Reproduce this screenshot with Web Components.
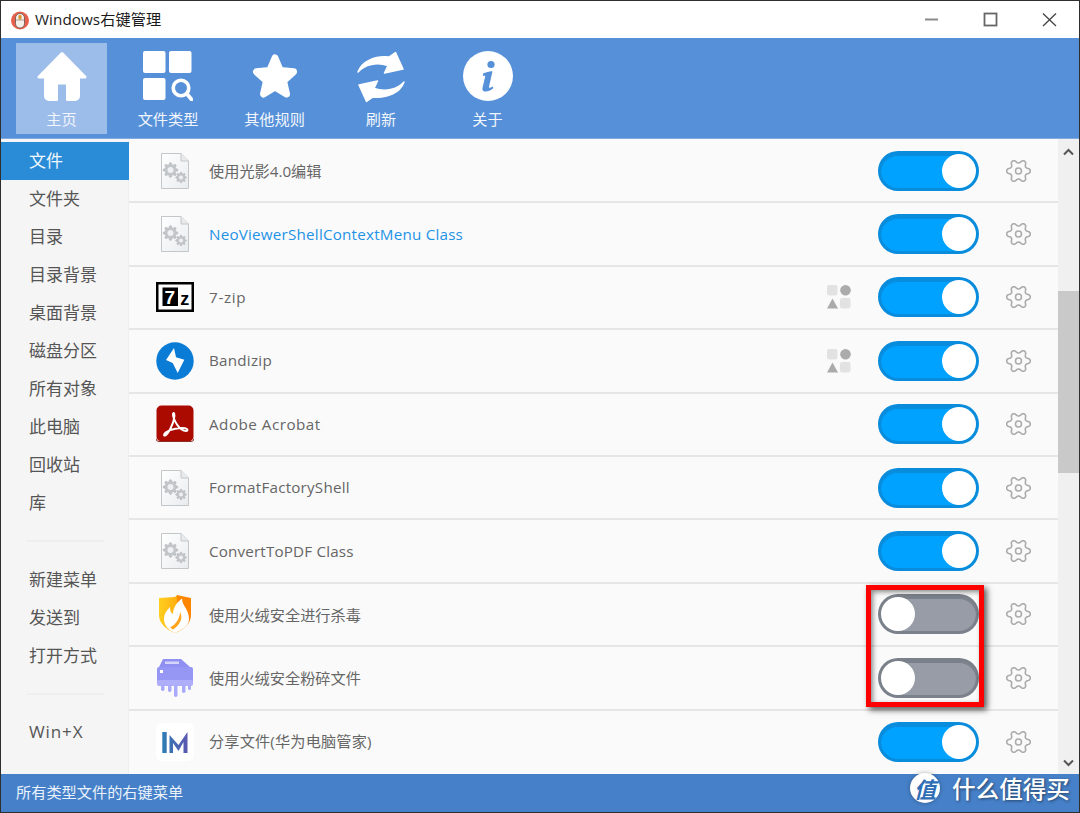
<!DOCTYPE html>
<html lang="zh"><head><meta charset="utf-8"><title>Windows右键管理</title>
<style>
html,body{margin:0;padding:0;height:100%;overflow:hidden}
body{background:#2e2e2e;font-family:"Open Sans","Noto Sans CJK SC",sans-serif}
svg{display:block}
</style></head><body>
<app-window>
  <title-bar slot="title">Windows右键管理</title-bar>
  <tool-bar slot="tools">
    <tool-item active label="主页"><svg width="50" height="50" viewBox="0 0 50 50"><path fill="#fff" stroke="#fff" stroke-width="3" stroke-linejoin="round" d="M25 2.500 2 26H8.500V45a3.500 3.500 0 0 0 3.500 3.500H19.500V32H30.500V48.500H38A3.500 3.500 0 0 0 41.500 45V26H48Z"/></svg></tool-item>
    <tool-item label="文件类型"><svg width="50" height="50" viewBox="0 0 50 50"><g fill="#fff"><rect x="0" y="0" width="22.500" height="22" rx="2"/><rect x="26" y="0" width="22.500" height="22" rx="2"/><rect x="0" y="27" width="22.500" height="22" rx="2"/></g><circle cx="38" cy="37" r="7.800" fill="none" stroke="#fff" stroke-width="3.600"/><path d="M44 43l5 6" stroke="#fff" stroke-width="3.800" stroke-linecap="round"/></svg></tool-item>
    <tool-item label="其他规则"><svg width="50" height="50" viewBox="0 0 50 50"><path fill="#fff" stroke="#fff" stroke-width="7" stroke-linejoin="round" d="M25 7 30.300 19.500 43.500 20.800 33.500 29.800 36.500 43 25 36 13.500 43 16.500 29.800 6.500 20.800 19.700 19.500Z"/></svg></tool-item>
    <tool-item label="刷新"><svg width="50" height="52" viewBox="0 0 48 52"><g fill="#fff" stroke="#fff" stroke-width="1.500" stroke-linejoin="round"><path d="M1 21C5 10 18 4.500 32 6L38.500 1.500 46 18 27.500 22 31 14.500C20 11 8 13 1 21Z"/><path d="M47 31C43 42 30 47.500 16 46L9.500 50.500 2 34 20.500 30 17 37.500C28 41 40 39 47 31Z"/></g></svg></tool-item>
    <tool-item label="关于"><svg width="50" height="50" viewBox="0 0 50 50"><circle cx="25" cy="25" r="25" fill="#fff"/><circle cx="28" cy="13.500" r="3.600" fill="#5590d8"/><path fill="#5590d8" d="M20 22.500c3-1.500 7-2.500 9.500-2.300l-3.500 15.500c-.3 1.400.8 1.600 3.800-.2l.6 1.400c-3 2.700-5.800 3.600-8 3.500-2.800-.1-3.300-1.800-2.800-4l2.700-11.500c-.8-.2-1.400-.1-2.300.1Z"/></svg></tool-item>
  </tool-bar>
  <side-bar slot="side">
    <side-item active>文件</side-item><side-item>文件夹</side-item><side-item>目录</side-item><side-item>目录背景</side-item><side-item>桌面背景</side-item><side-item>磁盘分区</side-item><side-item>所有对象</side-item><side-item>此电脑</side-item><side-item>回收站</side-item><side-item>库</side-item>
    <side-sep></side-sep>
    <side-item>新建菜单</side-item><side-item>发送到</side-item><side-item>打开方式</side-item>
    <side-sep></side-sep>
    <side-item style="letter-spacing:.9px">Win+X</side-item>
  </side-bar>
  <rule-list slot="list">
    <rule-row on><file-icon slot="icon"></file-icon>使用光影4.0编辑</rule-row>
    <rule-row on link style="letter-spacing:.22px"><file-icon slot="icon"></file-icon>NeoViewerShellContextMenu Class</rule-row>
    <rule-row on shapes style="letter-spacing:.7px"><svg slot="icon" width="38" height="30" viewBox="0 0 38 30"><rect x="1.250" y="1.250" width="35.500" height="27.500" fill="#fff" stroke="#000" stroke-width="2.500"/><rect x="6.500" y="5.500" width="15.500" height="18.500" fill="#000"/><text x="14.200" y="21.500" text-anchor="middle" font-family="Liberation Sans" font-weight="700" font-size="19" fill="#fff">7</text><text x="29" y="22.500" text-anchor="middle" font-family="Liberation Sans" font-weight="700" font-size="18" fill="#000">z</text></svg>7-zip</rule-row>
    <rule-row on shapes style="letter-spacing:.25px"><svg slot="icon" width="38" height="38" viewBox="0 0 38 38"><circle cx="19" cy="19" r="18.700" fill="#0a7cd6"/><path fill="#fff" d="M18 6 10 18 16.700 21 21.700 31 28.300 17.700 20 15.300Z"/></svg>Bandizip</rule-row>
    <rule-row on style="letter-spacing:.5px"><svg slot="icon" width="38" height="38" viewBox="0 0 38 38"><rect x=".5" y=".5" width="37" height="36" rx="5" fill="#ab0a00"/><path d="M0 33.500q0 3 3 3h32q3 0 3-3" fill="none" stroke="#8c2d25" stroke-width="1"/><path fill="none" stroke="#fff" stroke-width="2" stroke-linejoin="round" d="M17.500 8c-1.500 1 .5 7 3.500 11.500s6.500 6.500 9 6.500c2.500 0 1.500-2.500-1-2.800-5.500-.6-14 .5-19 4-2.500 2-2.300 3.800-1 3.300 2.800-1 8.500-11 9.300-18.500.3-2.500-.3-4.500-.8-4Z"/></svg>Adobe Acrobat</rule-row>
    <rule-row on style="letter-spacing:.22px"><file-icon slot="icon"></file-icon>FormatFactoryShell</rule-row>
    <rule-row on style="letter-spacing:.17px"><file-icon slot="icon"></file-icon>ConvertToPDF Class</rule-row>
    <rule-row><svg slot="icon" width="34" height="40" viewBox="0 0 34 40"><defs><linearGradient id="sh" x1="0" x2="1" y1="0" y2="0"><stop offset="0" stop-color="#ffcf1f"/><stop offset=".55" stop-color="#ffb012"/><stop offset=".56" stop-color="#ff8a00"/><stop offset="1" stop-color="#ff8400"/></linearGradient></defs><path fill="url(#sh)" d="M17 3 19 1 33 4V21C33 30 25 36 17 39 9 36 1 30 1 21V4Z"/><path fill="#fff" d="M24 4.500C24 12 31 15 31 25 31 32 24 36 17 39 10 36 6 31 6 25 6 20 9 16 12 13 12 17 13 19 15 20 15 14 18 9 24 4.500Z"/><path fill="#ffa41a" d="M12 33.500C18 30.500 22 24 22 18 25.500 24 22 31 15 35.500Z"/></svg>使用火绒安全进行杀毒</rule-row>
    <rule-row><svg slot="icon" width="36" height="38" viewBox="0 0 36 38"><path fill="#9090f2" d="M6 0H24L33 8H2Z"/><rect x="8" y="2.500" width="14" height="2.500" fill="#d5d5fc"/><rect x="0" y="8" width="36" height="17" rx="2" fill="#9696f5"/><rect x="3" y="11" width="3" height="3" fill="#fff"/><rect x="0" y="21" width="36" height="6" rx="2" fill="#aeaefb"/><g fill="#aaaafa"><rect x="4" y="26" width="3.500" height="6" rx="1.700"/><rect x="11" y="26" width="3.500" height="7" rx="1.700"/><rect x="17" y="26" width="3.500" height="12" rx="1.700"/><rect x="25" y="26" width="3.500" height="8" rx="1.700"/><rect x="31" y="26" width="3" height="5" rx="1.500"/></g></svg>使用火绒安全粉碎文件</rule-row>
    <rule-row on style="letter-spacing:.15px"><svg slot="icon" width="38" height="38" viewBox="0 0 38 38"><defs><linearGradient id="mm" x1="0" x2="1" y1="0" y2="0"><stop offset="0" stop-color="#2f7db5"/><stop offset="1" stop-color="#5b58b0"/></linearGradient></defs><rect width="38" height="38" rx="6" fill="#fff"/><path fill="url(#mm)" d="M6.300 9H10.700V30H6.300ZM13.500 12 22.500 22 31.500 9V30H27.500V19L22.500 28 17 20V30H13.500Z"/></svg>分享文件(华为电脑管家)</rule-row>
  </rule-list>
  <scroll-bar slot="scroll"></scroll-bar>
  <status-bar slot="status">所有类型文件的右键菜单</status-bar>
  <red-mark slot="overlay"></red-mark>
  <water-mark slot="overlay"></water-mark>
</app-window>
<script>
function def(name, css, html){
  customElements.define(name, class extends HTMLElement{
    constructor(){super();const r=this.attachShadow({mode:'open'});r.innerHTML='<style>'+css+'</style>'+(typeof html==='function'?html(this):html);}
  });
}
function polar(cx,cy,teeth,base,amp,pow,sy){
  let d='';const n=120;
  for(let i=0;i<=n;i++){
    const t=i/n*Math.PI*2, c=Math.cos(teeth*t);
    const r=base+amp*Math.sign(c)*Math.pow(Math.abs(c),pow);
    d+=(i?'L':'M')+(cx+r*Math.cos(t)).toFixed(2)+' '+(cy+r*sy*Math.sin(t)).toFixed(2);
  }
  return d+'Z';
}
def('app-window',`
:host{display:grid;position:relative;margin:1px;height:811px;width:1078px;
 grid-template-columns:128px 1fr 21px;grid-template-rows:37px 101px 1fr 38px;background:#fafafa}
.t{grid-column:1/4}
.s{grid-column:1;grid-row:3;min-height:0}
.l{grid-column:2;grid-row:3;min-height:0;min-width:0}.c{grid-column:3;grid-row:3;min-height:0}
`,`<div class="t"><slot name="title"></slot></div><div class="t"><slot name="tools"></slot></div>
<div class="s"><slot name="side"></slot></div><div class="l"><slot name="list"></slot></div><div class="c"><slot name="scroll"></slot></div>
<div class="t" style="grid-row:4"><slot name="status"></slot></div><slot name="overlay"></slot>`);
def('title-bar',`
:host{display:flex;align-items:center;height:37px;background:#fff;color:#1a1a1a;font-size:15.200px;padding-left:10px;box-sizing:border-box}
.n{margin-left:6px;flex:1;margin-top:-3px;letter-spacing:.08px}
.w{display:flex}
.w svg{display:block;width:59px;height:37px}
`,`<svg width="18" height="20" viewBox="0 0 18 20" style="display:block"><circle cx="9" cy="10.500" r="9" fill="#e8604c"/><rect x="4.500" y="3.500" width="9" height="14.500" rx="4.400" fill="#f5f0ea" stroke="#6d5a50" stroke-width=".9"/><rect x="7.500" y="5" width="3" height="4.500" rx="1.200" fill="#d9962f"/><path d="M4.500 10H13.500" stroke="#8a7a70" stroke-width=".7"/></svg>
<span class="n"><slot></slot></span>
<div class="w">
<svg viewBox="0 0 59 37"><path d="M23 18.500H36" stroke="#8a8a8a" stroke-width="2"/></svg>
<svg viewBox="0 0 59 37"><rect x="23.500" y="12.500" width="12" height="12" fill="none" stroke="#666" stroke-width="1.800"/></svg>
<svg viewBox="0 0 59 37"><path d="M23 12.500 36 25M36 12.500 23 25" stroke="#444" stroke-width="1.300" fill="none"/></svg>
</div>`);
def('tool-bar',`
:host{display:flex;height:101px;box-sizing:border-box;background:#5590d8;padding:5px 0 5px 15px;gap:15.500px;border-bottom:1px solid #7fabe2}
`,`<slot></slot>`);
def('tool-item',`
:host{display:flex;flex-direction:column;align-items:center;width:91px;height:91px;box-sizing:border-box;padding-top:8px;color:#fff;font-size:15.200px}
:host([active]){background:#9cbce9}
.i{height:50px;display:flex;align-items:flex-start}
.l{margin-top:7px;line-height:22px;color:#f2f6fc}
`,e=>`<div class="i"><slot></slot></div><div class="l">${e.getAttribute('label')}</div>`);
def('side-bar',`
:host{display:block;height:100%;background:#f5f5f5;padding-top:3px;box-sizing:border-box;border-right:1px solid #eee}
`,`<slot></slot>`);
def('side-item',`
:host{display:block;height:38px;line-height:38px;padding-left:28px;font-size:17px;color:#555;box-sizing:border-box;margin-right:-1px}
:host([active]){background:#2a8cd6;color:#f2f8ff}
`,`<slot></slot>`);
def('side-sep',`
:host{display:flex;align-items:center;height:38.500px;padding:0 24px 0 26px}
i{display:block;flex:1;height:2px;background:#eeeeee}
`,`<i></i>`);
def('rule-list',`
:host{display:block;height:635px;box-sizing:border-box;padding-top:1px;overflow:hidden;background:#fafafa}
`,`<slot></slot>`);
def('rule-row',`
:host{display:flex;align-items:center;height:63.400px;box-sizing:border-box;border-bottom:2px solid #e6e6e6;color:#666;font-size:15.200px;padding:0 27px 0 27px}
:host(:last-child){border-bottom:0}
.ic{width:38px;display:flex;justify-content:center;align-items:center;margin-right:15px}
.tx{flex:1;white-space:nowrap;padding-bottom:1px}
:host(:last-child) .tx{padding-bottom:4px}
:host([link]) .tx{color:#1e93e6}
.sh{width:24px;height:24px;margin-right:27px}
.tg{margin-right:27px}
`,e=>`<div class="ic"><slot name="icon"></slot></div><div class="tx"><slot></slot></div>
${e.hasAttribute('shapes')?`<svg class="sh" viewBox="0 0 24 24"><rect x="0" y="0" width="10.500" height="10.500" rx="2" fill="#e2e2e2"/><circle cx="18.500" cy="5.300" r="5.300" fill="#ababab"/><path d="M5.500 13.500 11 23.500H0Z" fill="#ababab"/><rect x="13" y="13" width="10.500" height="10.500" rx="2" fill="#e2e2e2"/></svg>`:''}
<on-off class="tg" ${e.hasAttribute('on')?'on':''}></on-off><gear-icon></gear-icon>`);
def('on-off',`
:host{display:block;width:101px;height:40px;box-sizing:border-box;border-radius:20px;background:#979ca6;border:3px solid #7b818a;border-top-width:4px;position:relative;flex:none;box-shadow:inset 0 1px 0 #7b818a}
:host([on]){background:#00a2ff;border-color:#0a8cdc;box-shadow:inset 0 1px 0 #0a8cdc}
i{position:absolute;top:-1px;left:0;width:34px;height:34px;border-radius:50%;background:#fff}
:host([on]) i{left:auto;right:0}
`,`<i></i>`);
def('gear-icon',`
:host{display:block;width:25px;height:24px;flex:none}
`,`<svg width="25" height="24" viewBox="0 0 25 24" style="display:block"><path d="${polar(12.5,12,6,10,1.8,.7,.97)}" fill="none" stroke="#ababab" stroke-width="1.600" stroke-linejoin="round"/><circle cx="12.500" cy="12" r="3" fill="none" stroke="#ababab" stroke-width="1.500"/></svg>`);
def('file-icon',`
:host{display:block;width:28px;height:36px}
`,`<svg width="28" height="36" viewBox="0 0 28 36" style="display:block"><defs><linearGradient id="p" x1="0" y1="0" x2="1" y2="1"><stop offset="0" stop-color="#fff"/><stop offset="1" stop-color="#e9ecee"/></linearGradient></defs><path d="M.5.5H20L27.500 8V35.500H.5Z" fill="url(#p)" stroke="#c4c7ca"/><path d="M20 .5V8H27.500" fill="#e8eaec" stroke="#c4c7ca"/>
<path d="${polar(9.5,17,8,6.3,1.1,.6,1)}" fill="#c2c6c9" stroke="#aeb2b6" stroke-width=".6"/><circle cx="9.500" cy="17" r="3" fill="#eef0f1"/>
<path d="${polar(20,24.5,8,4.5,.9,.6,1)}" fill="#c2c6c9" stroke="#aeb2b6" stroke-width=".6"/><circle cx="20" cy="24.500" r="2" fill="#eef0f1"/></svg>`);
def('scroll-bar',`
:host{display:block;position:relative;height:635px;background:#f0f0f0}
.th{position:absolute;left:0;right:0;top:152px;height:182px;background:#c9c9c9}
svg{position:absolute;left:4px}
`,`<svg width="13" height="8" viewBox="0 0 13 8" style="top:9px"><path d="M2 6.500 6.500 2 11 6.500" fill="none" stroke="#555" stroke-width="2"/></svg>
<div class="th"></div>
<svg width="13" height="8" viewBox="0 0 13 8" style="top:620px"><path d="M2 1.500 6.500 6 11 1.500" fill="none" stroke="#555" stroke-width="2"/></svg>`);
def('status-bar',`
:host{display:block;height:38px;line-height:36px;background:#4680c8;color:#eaf2fc;font-size:15.200px;padding-left:15px;box-sizing:border-box}
`,`<slot></slot>`);
def('red-mark',`
:host{position:absolute;left:865px;top:584px;width:118px;height:122px;box-sizing:border-box;border:5px solid #f00;box-shadow:3px 3px 6px rgba(0,0,0,.65),inset 2px 2px 5px rgba(0,0,0,.45)}
`,``);
def('water-mark',`
:host{position:absolute;left:909px;top:771px;display:flex;align-items:center;height:32px;color:#fff}
.c{width:30px;height:30px;border-radius:50%;background:#fff;color:#2f6db5;display:flex;align-items:center;justify-content:center;font:700 22px "Noto Sans CJK SC",sans-serif;font-style:italic;box-shadow:0 0 4px rgba(0,0,0,.3)}
.t{margin-left:12px;font:500 23.600px/32px "Noto Sans CJK SC",sans-serif;text-shadow:1px 1px 3px rgba(0,0,0,.5);white-space:nowrap}
`,`<div class="c">值</div><div class="t">什么值得买</div>`);
</script>
</body></html>
